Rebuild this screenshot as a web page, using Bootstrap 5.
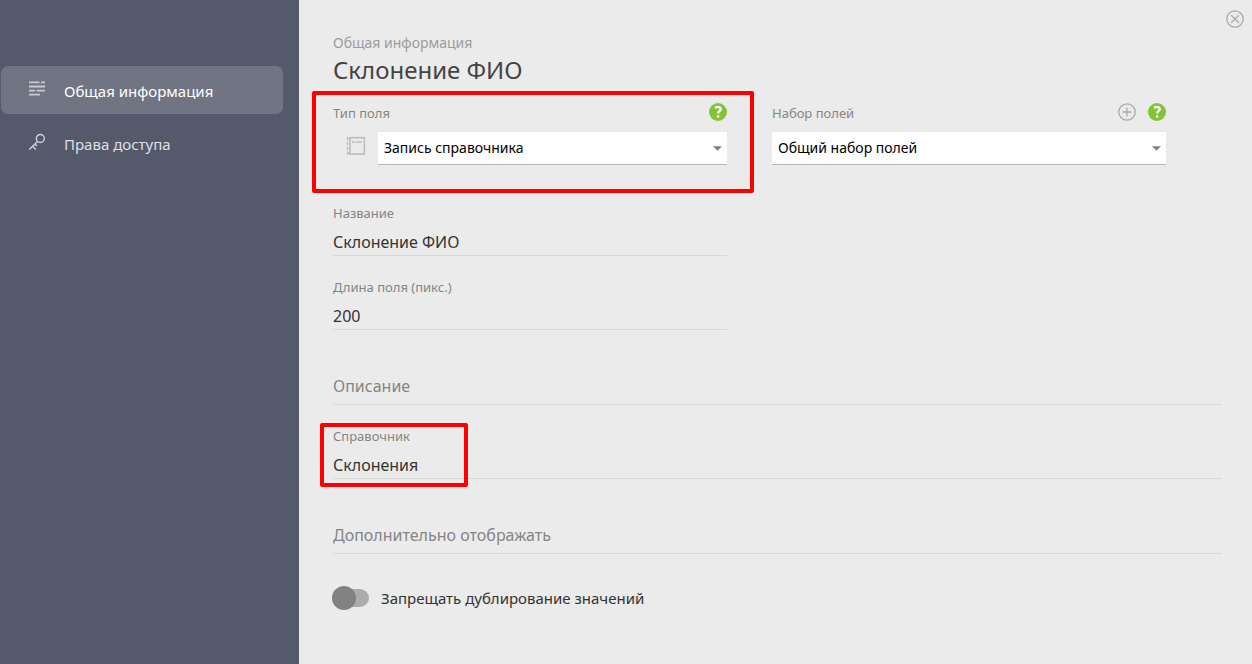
<!DOCTYPE html>
<html lang="ru">
<head>
<meta charset="utf-8">
<meta name="viewport" content="width=device-width, initial-scale=1">
<title>Склонение ФИО</title>
<link href="https://cdn.jsdelivr.net/npm/bootstrap@5.3.0/dist/css/bootstrap.min.css" rel="stylesheet">
<style>
  body { font-family: "Noto Sans", "Open Sans", sans-serif; font-size: 15px; line-height: 20px; background: #ebebeb; color: #333; }
  .side { width: 299px; background: #54596b; padding: 66px 16px 0 1px; }
  .side .nav { gap: 5px; }
  .side .nav-link { height: 48px; padding: 2px 0 0 26px; gap: 17px; border-radius: 7px; color: #dfe0e4; font-size: 15px; }
  .side .nav-link.active { background: #717482; color: #fff; }
  .side .nav-link svg { margin-bottom: 4px; }
  .panel { padding: 33px 30px 32px 34px; }
  .caption { font-size: 14px; color: #9c9c9c; }
  .heading { font-size: 24px; line-height: 34px; font-weight: 400; color: #444; }
  .pair { display: grid; grid-template-columns: 1fr 1fr; column-gap: 45px; margin-right: 56px; }
  .lbl { font-size: 13px; line-height: 20px; color: #858585; margin: 0; }
  .pick-row { margin-top: 9px; }
  .pick { height: 33px; padding: 0 24px 0 6px; border: 0; border-bottom: 1px solid #b5b5b5; border-radius: 0; font-size: 14px; line-height: 32px; color: #000; background-color: #fff;
    background-image: url("data:image/svg+xml,%3Csvg xmlns='http://www.w3.org/2000/svg' viewBox='0 0 10 5'%3E%3Cpath fill='%23808080' d='M0 0h10L5 5z'/%3E%3C/svg%3E"); background-size: 9px 5px; background-position: right 5px center; }
  .line { height: 26px; padding: 0 0 1px; border: 0; border-bottom: 1px solid #d9d9d9; border-radius: 0; background: transparent; font-size: 16px; line-height: 24px; color: #333; }
  .line:focus { background: transparent; }
  .line::placeholder { color: #858585; }
  .line.tall { height: 37px; }
  .stack { display: grid; row-gap: 21px; }
  .stack .lbl { display: block; margin-bottom: 7px; }
  .section { margin-top: 38px; }
  .mark-box { position: absolute; border: 4px solid #f00; border-radius: 2px; pointer-events: none; }
  .mark-type { inset: -12px -27px -28px -21px; }
  .mark-ref { top: -3px; left: -13px; width: 148px; height: 64px; }
  .tool { border: 0; padding: 0; background: none; line-height: 0; }
  .pair .tool { margin-bottom: 2px; }
  .close-btn { position: absolute; top: 10px; right: 8px; }
  .toggle { padding: 0; margin-top: 32px; gap: 12px; min-height: 24px; margin-left: -1px; }
  .toggle .form-check-input { appearance: none; float: none; position: relative; width: 37px; height: 18px; margin: 0; border: 0; border-radius: 9px; background: #acacac; }
  .toggle .form-check-input::before { content: ""; position: absolute; left: 0; top: -3px; width: 24px; height: 24px; border-radius: 50%; background: #828282; }
  .toggle .form-check-input:checked::before { left: auto; right: 0; }
</style>
</head>
<body>
<div class="d-flex min-vh-100">
  <aside class="side flex-shrink-0">
    <nav class="nav flex-column">
      <a href="#" class="nav-link active d-flex align-items-center" aria-current="page">
        <svg width="20" height="18" viewBox="0 0 20 18" fill="none" stroke="#c9cacf" stroke-width="1.8"><path d="M2 2.400h10.500M14 2.400h4M2 6.500h16M2 10.600h6M9.500 10.600h8.500M2 14.700h11"/></svg>
        <span>Общая информация</span>
      </a>
      <a href="#" class="nav-link d-flex align-items-center">
        <svg width="20" height="18" viewBox="0 0 20 18" fill="none" stroke="#d0d1d7" stroke-width="1.400"><circle cx="13.300" cy="5.500" r="4"/><path d="M10.500 8.400 2.300 16.600M5.600 13.300l3.300 3.200M8 11l2 2"/></svg>
        <span>Права доступа</span>
      </a>
    </nav>
  </aside>

  <main class="panel flex-grow-1 position-relative">
    <button type="button" class="tool close-btn" aria-label="Закрыть">
      <svg width="18" height="18" viewBox="0 0 18 18" fill="none" stroke="#aaa" stroke-width="1.300"><circle cx="9" cy="9" r="8.200"/><path d="m5.200 5.200 7.600 7.600m0-7.600-7.600 7.600"/></svg>
    </button>

    <div class="caption">Общая информация</div>
    <h1 class="heading mb-0">Склонение ФИО</h1>

    <div class="pair mt-3">
      <div class="position-relative">
        <div class="d-flex justify-content-between align-items-center">
          <label class="lbl" for="type">Тип поля</label>
          <button type="button" class="tool" aria-label="Справка">
            <svg width="18" height="18" viewBox="0 0 18 18" fill="none"><circle cx="9" cy="9" r="9" fill="#83c336"/><path stroke="#fff" stroke-width="2.200" d="M5.900 4.700c1.700-.9 5.900-1 5.900 1.500 0 2-2.700 1.600-2.700 4.200"/><rect x="7.800" y="12.200" width="2.600" height="2.600" rx="1" fill="#fff"/></svg>
          </button>
        </div>
        <div class="d-flex pick-row">
          <svg class="flex-shrink-0" width="45" height="30" viewBox="0 0 45 30" fill="none" stroke="#bdbdbd"><rect x="17" y="5.700" width="14.400" height="16.400" stroke-width="1.600"/><path stroke-width="1.300" d="M14.600 5v3M14.600 9.500v3.500M14.600 14.500v3.500M14.600 19.500v3.500M14 6h3M14 21h3"/><path stroke-width="1.500" d="M19 9.900h3M23 9.900h6"/></svg>
          <select class="form-select pick" id="type"><option>Запись справочника</option></select>
        </div>
        <div class="mark-box mark-type"></div>
      </div>
      <div>
        <div class="d-flex align-items-center">
          <label class="lbl me-auto" for="set">Набор полей</label>
          <button type="button" class="tool" aria-label="Добавить">
            <svg width="18" height="18" viewBox="0 0 18 18" fill="none" stroke="#aaa" stroke-width="1.300"><circle cx="9" cy="9" r="8.200"/><path d="M9 4.500v9M4.500 9h9"/></svg>
          </button>
          <button type="button" class="tool ms-2 ps-1" aria-label="Справка">
            <svg width="18" height="18" viewBox="0 0 18 18" fill="none"><circle cx="9" cy="9" r="9" fill="#83c336"/><path stroke="#fff" stroke-width="2.200" d="M5.900 4.700c1.700-.9 5.900-1 5.900 1.500 0 2-2.700 1.600-2.700 4.200"/><rect x="7.800" y="12.200" width="2.600" height="2.600" rx="1" fill="#fff"/></svg>
          </button>
        </div>
        <div class="pick-row">
          <select class="form-select pick" id="set"><option>Общий набор полей</option></select>
        </div>
      </div>
    </div>

    <div class="pair section">
      <div class="stack">
        <div><label class="lbl" for="name">Название</label><input class="form-control line" id="name" type="text" value="Склонение ФИО"></div>
        <div><label class="lbl" for="len">Длина поля (пикс.)</label><input class="form-control line" id="len" type="text" value="200"></div>
      </div>
    </div>

    <div class="stack section">
      <input class="form-control line tall" type="text" placeholder="Описание" aria-label="Описание">
      <div class="position-relative">
        <label class="lbl" for="ref">Справочник</label>
        <input class="form-control line" id="ref" type="text" value="Склонения">
        <div class="mark-box mark-ref"></div>
      </div>
    </div>
    <div class="section">
      <input class="form-control line tall" type="text" placeholder="Дополнительно отображать" aria-label="Дополнительно отображать">
    </div>

    <div class="form-check form-switch toggle d-flex align-items-center">
      <input class="form-check-input flex-shrink-0" type="checkbox" role="switch" id="dup">
      <label class="form-check-label" for="dup">Запрещать дублирование значений</label>
    </div>
  </main>
</div>
<script src="https://cdn.jsdelivr.net/npm/bootstrap@5.3.0/dist/js/bootstrap.bundle.min.js"></script>
</body>
</html>
